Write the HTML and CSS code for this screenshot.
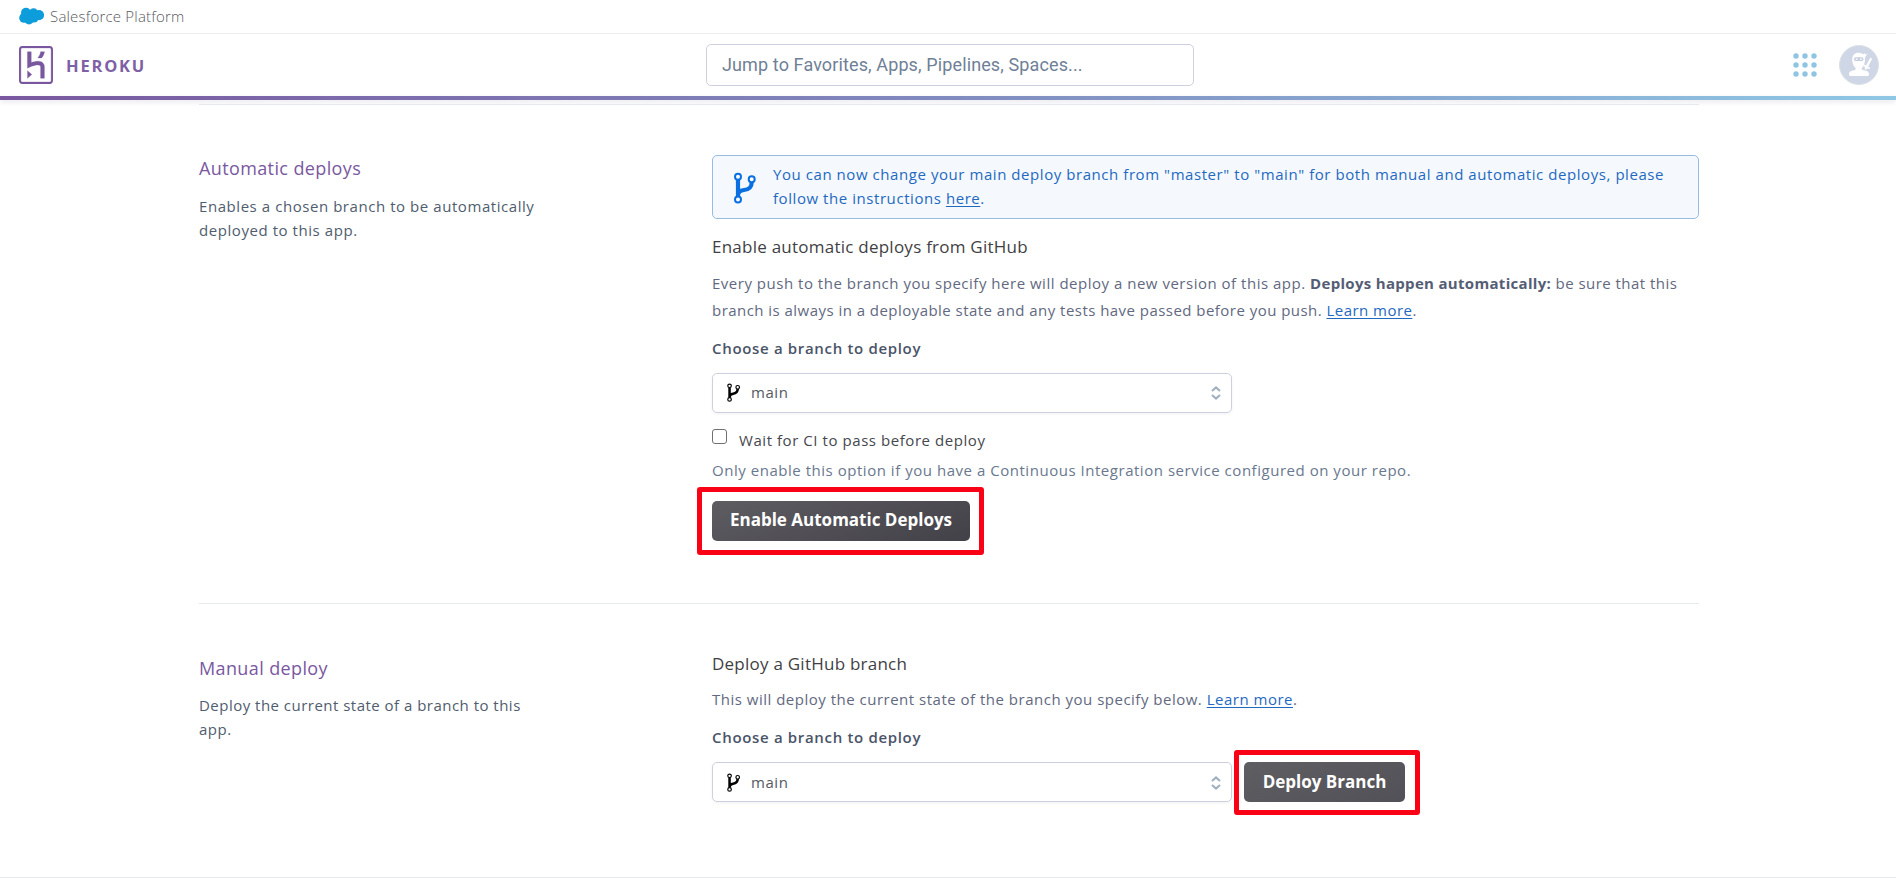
FILE: index.html
```html
<!DOCTYPE html>
<html lang="en">
<head>
<meta charset="utf-8">
<title>Deploy | Heroku</title>
<link rel="stylesheet" href="styles.css">
</head>
<body>
<svg width="0" height="0" class="sprite" aria-hidden="true">
  <symbol id="branch" viewBox="0 0 23 32">
    <path d="M4 8v17M17.7 10.3c0 5.7-3.2 7.2-7.7 7.7-4 .5-6 1.8-6 6" fill="none" stroke="currentColor" stroke-width="4.2"/>
    <g fill="#fff" stroke="currentColor" stroke-width="2"><circle cx="4" cy="4.8" r="3"/><circle cx="17.7" cy="7.2" r="3"/><circle cx="4" cy="27.6" r="3"/></g>
  </symbol>
  <symbol id="sort" viewBox="0 0 12 14">
    <path d="M2 5l4-3.6L10 5M2 9l4 3.6L10 9" fill="none" stroke="#a0aec0" stroke-width="2"/>
  </symbol>
</svg>

<div class="topbar">
  <svg class="cloud" viewBox="0 0 25 18"><g fill="#0d9dda"><circle cx="7" cy="5.8" r="5"/><circle cx="14.6" cy="6" r="4.7"/><circle cx="5" cy="11" r="4.8"/><circle cx="20" cy="8.2" r="5.1"/><circle cx="15" cy="11" r="4.6"/><circle cx="10" cy="12.6" r="4.9"/></g></svg>
  <span>Salesforce Platform</span>
</div>

<header class="nav">
  <div class="brand">
    <svg class="logo" viewBox="1.23 0 21.54 24"><path fill="#79589f" stroke="#79589f" stroke-width=".2" d="M20.61 0H3.39C2.189 0 1.23.96 1.23 2.16v19.681c0 1.198.959 2.159 2.16 2.159h17.22c1.2 0 2.159-.961 2.159-2.159V2.16C22.77.96 21.811 0 20.61 0zm.96 21.841c0 .539-.421.96-.96.96H3.39c-.54 0-.96-.421-.96-.96V2.16c0-.54.42-.961.96-.961h17.22c.539 0 .96.421.96.961v19.681zM6.63 20.399L9.33 18l-2.7-2.4v4.799zm9.72-9.719c-.479-.48-1.379-1.08-2.879-1.08-1.621 0-3.301.421-4.5.84V3.6h-2.4v10.38l1.68-.78s2.76-1.26 5.16-1.26c1.2 0 1.5.66 1.5 1.26v7.2h2.4v-7.2c.059-.179.059-1.501-.961-2.52zM13.17 7.5h2.4c1.08-1.26 1.62-2.521 1.8-3.9h-2.399c-.241 1.379-.841 2.64-1.801 3.9z"/></svg>
    <span class="wordmark">HEROKU</span>
  </div>
  <div class="search">Jump to Favorites, Apps, Pipelines, Spaces...</div>
  <div class="tools">
    <svg class="dots" viewBox="0 0 24 24"><g fill="#8fc4e3"><circle cx="3" cy="3" r="2.7"/><circle cx="12" cy="3" r="2.7"/><circle cx="21" cy="3" r="2.7"/><circle cx="3" cy="12" r="2.7"/><circle cx="12" cy="12" r="2.7"/><circle cx="21" cy="12" r="2.7"/><circle cx="3" cy="21" r="2.7"/><circle cx="12" cy="21" r="2.7"/><circle cx="21" cy="21" r="2.7"/></g></svg>
    <svg class="avatar" viewBox="0 0 40 40">
      <circle cx="20" cy="20" r="19.5" fill="#cfd7e6" stroke="#dcdfe5"/>
      <path fill="#fff" d="M13.200 14.200c0-4 2.700-6.500 6.200-6.500 2.200 0 3.800.8 4.800 1.800l1.600-1.600v1.500l3-.6-2.400 2.400.6 1.400-1.300-.4c.2.700.300 1.300.300 2 0 4-1.500 7-3.200 8.800v1.400c1 .7 2.700.8 4.200 1.300 1.800.7 3 1.700 3 3.500 0 1.200-.6 1.800-1.800 1.800H11.800c-1.200 0-1.800-.6-1.800-1.800 0-1.800 1.200-2.800 3-3.500 1.400-.5 2.600-.6 3.600-1.300V23c-2-1.700-3.400-4.800-3.400-8.800z"/>
      <rect x="15" y="12.300" width="9.400" height="3.600" rx="1.600" fill="#c3cddd"/>
      <path d="M16.500 14.100h2.200M20.800 14.100h2.200" stroke="#fff" stroke-width="1.200"/>
      <path d="M31.800 14l-5 9.600M25.400 20.600l4.400 2.300" stroke="#fff" stroke-width="2.200" stroke-linecap="round"/>
    </svg>
  </div>
</header>
<div class="stripe"></div>

<main class="page">
  <section class="block auto">
    <div class="aside">
      <h2>Automatic deploys</h2>
      <p>Enables a chosen branch to be automatically<br>deployed to this app.</p>
    </div>
    <div class="content">
      <div class="notice">
        <svg class="notice-icon"><use href="#branch"/></svg>
        <p>You can now change your main deploy branch from "master" to "main" for both manual and automatic deploys, please<br>follow the instructions <a href="#">here</a>.</p>
      </div>
      <h3>Enable automatic deploys from GitHub</h3>
      <p class="desc">Every push to the branch you specify here will deploy a new version of this app. <b>Deploys happen automatically:</b> <span class="snug">be sure that this</span><br><span class="snug">branch is always in a deployable state and any tests have passed before you push. <a href="#">Learn more</a>.</span></p>
      <div class="label">Choose a branch to deploy</div>
      <div class="select"><svg class="select-icon"><use href="#branch"/></svg><span>main</span><svg class="sort"><use href="#sort"/></svg></div>
      <div class="check"><span class="box"></span><span>Wait for CI to pass before deploy</span></div>
      <p class="hint">Only enable this option if you have a Continuous Integration service configured on your repo.</p>
      <div class="action enable"><button class="btn">Enable Automatic Deploys</button><span class="frame"></span></div>
    </div>
  </section>

  <section class="block manual">
    <div class="aside">
      <h2>Manual deploy</h2>
      <p>Deploy the current state of a branch to this<br>app.</p>
    </div>
    <div class="content">
      <h3>Deploy a GitHub branch</h3>
      <p class="desc snug">This will deploy the current state of the branch you specify below. <a href="#">Learn more</a>.</p>
      <div class="label">Choose a branch to deploy</div>
      <div class="row">
        <div class="select"><svg class="select-icon"><use href="#branch"/></svg><span>main</span><svg class="sort"><use href="#sort"/></svg></div>
        <div class="action deploy"><button class="btn">Deploy Branch</button><span class="frame"></span></div>
      </div>
    </div>
  </section>
</main>
<footer class="foot"></footer>
</body>
</html>
```
FILE: styles.css
```css
* { box-sizing: border-box; }
body {
  margin: 0;
  height: 878px;
  overflow: hidden;
  background: #fff;
  color: #4f5d6e;
  font: 15px/24px "Open Sans", sans-serif;
  letter-spacing: .56px;
}
h2, h3, p { margin: 0; font-weight: 400; }
a { color: #1f69c0; text-decoration: underline; text-underline-offset: 2px; text-decoration-thickness: 1px; }
svg { display: block; flex: none; }
.sprite { display: none; }

.topbar {
  height: 34px;
  padding: 0 0 1px 19px;
  border-bottom: 1px solid #ededf0;
  display: flex;
  align-items: center;
  gap: 6px;
  color: #58585e;
  font-weight: 300;
  letter-spacing: .2px;
}
.cloud { width: 25px; height: 18px; }

.nav {
  height: 62px;
  padding: 0 17px 0 19px;
  display: grid;
  grid-template-columns: 687px 488px 1fr;
  align-items: center;
}
.brand { display: flex; align-items: center; gap: 13px; }
.logo { width: 34px; height: 38px; }
.wordmark { color: #7f5fa5; font-size: 16.5px; font-weight: 700; letter-spacing: 1.8px; padding-top: 2px; }
.search {
  height: 42px;
  padding: 0 15px;
  border: 1px solid #cfd0de;
  border-radius: 5px;
  color: #6f7f97;
  font: 18px/40px Roboto, sans-serif;
  letter-spacing: .12px;
}
.tools { display: flex; align-items: center; justify-content: flex-end; gap: 22px; }
.dots { width: 24px; height: 24px; }
.avatar { width: 40px; height: 40px; }
.stripe {
  height: 4px;
  background: linear-gradient(90deg, #79589f 0%, #8088bd 48%, #8fc8e4 100%);
  box-shadow: 0 2px 5px rgba(60, 60, 110, .12);
}

.page { width: 1500px; margin: 4px 0 0 199px; }
.block {
  display: grid;
  grid-template-columns: 513px 987px;
  border-top: 1px solid #e8e9ee;
}
.auto { height: 499px; }
.manual { height: 274px; }
.auto .aside { padding-top: 51px; }
.auto .content { padding-top: 50px; }
.manual .aside { padding-top: 52px; }
.manual .content { padding-top: 48px; }

h2 { color: #79589f; font-size: 18px; letter-spacing: .38px; margin-bottom: 14px; }
.manual h2 { margin-bottom: 13px; }
h3 { color: #3f3f44; font-size: 17px; letter-spacing: .24px; }
.manual .aside p { letter-spacing: .48px; }

.notice {
  height: 64px;
  padding: 6px 0 0 21px;
  display: flex;
  gap: 16px;
  border: 1px solid #96bce0;
  border-radius: 5px;
  background: #f5f9fe;
  color: #1f69c0;
  white-space: nowrap;
}
.notice-icon { width: 23px; height: 32px; margin-top: 10px; color: #0a6fe0; }
.auto h3 { margin-top: 16px; }

.desc { color: #62697f; line-height: 27px; letter-spacing: .51px; margin-top: 11px; white-space: nowrap; }
.manual .desc { margin-top: 10px; }
.desc b { letter-spacing: .31px; color: #555d75; }
.snug, .desc.snug { letter-spacing: .46px; }
.manual .desc.snug { letter-spacing: .5px; }
.label { color: #4a5468; font-weight: 600; letter-spacing: .67px; margin: 12px 0 13px; }

.select {
  width: 520px;
  height: 40px;
  padding: 0 9px 2px 14px;
  display: flex;
  align-items: center;
  border: 1px solid #cfd0de;
  border-radius: 5px;
  box-shadow: 0 1px 3px rgba(60, 60, 110, .07);
  color: #55595f;
}
.manual .select { padding-bottom: 0; }
.select-icon { width: 14px; height: 19px; margin: 1px 10px 0 0; color: #000; }
.sort { width: 12px; height: 14px; margin: 2px 0 0 auto; }

.check { display: flex; gap: 12px; margin-top: 15px; color: #45484e; }
.box { width: 15px; height: 15px; margin-top: 1px; border: 1px solid #6f6f75; border-radius: 3px; }
.hint { margin-top: 6px; color: #6a788e; letter-spacing: .53px; white-space: nowrap; }

.row { display: flex; gap: 12px; }
.action { position: relative; width: max-content; }
.enable { margin-top: 19px; }
.btn {
  display: block;
  height: 40px;
  padding: 0 0 2px;
  border: 0;
  border-radius: 5px;
  color: #fff;
  font: 700 17px/38px "Open Sans", sans-serif;
  background: linear-gradient(160deg, #5e5d62, #434148);
}
.enable .btn { width: 258px; }
.deploy .btn { width: 161px; padding: 0; background: linear-gradient(160deg, #5f5e63, #525157); }
.frame { position: absolute; border: 5px solid #fa0216; border-radius: 3px; pointer-events: none; }
.enable .frame { inset: -14px -14px -14px -15px; }
.deploy .frame { inset: -12px -15px -13px -10px; }

.foot { border-top: 1px solid #e8e9ee; }
```
